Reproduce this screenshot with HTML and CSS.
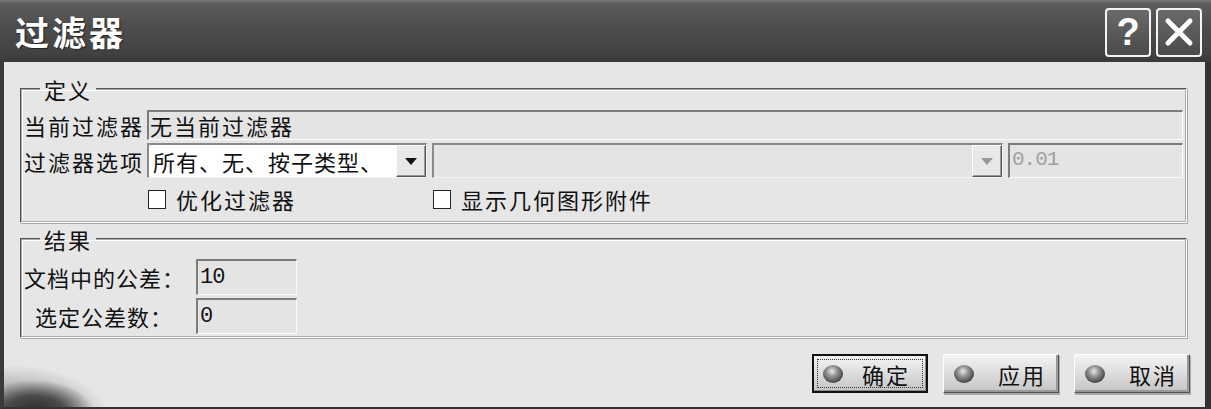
FILE: index.html
```html
<!DOCTYPE html>
<html>
<head>
  <meta charset="utf-8">
  <link rel="stylesheet" href="styles.css">
</head>
<body>
  <div class="window">
    <div class="titlebar">
      <span class="title">过滤器</span>
      <div class="title-buttons">
        <span class="tbtn help">?</span>
        <span class="tbtn close">
          <svg width="34" height="34" viewBox="0 0 34 34">
            <path d="M6 6 L28 28 M28 6 L6 28" stroke="#fff" stroke-width="5" stroke-linecap="round"/>
          </svg>
        </span>
      </div>
    </div>

    <div class="content">
      <fieldset class="group">
        <legend>定义</legend>
        <div class="def-grid">
          <span class="lbl">当前过滤器</span>
          <div class="field wide">无当前过滤器</div>

          <span class="lbl">过滤器选项</span>
          <div class="combo">
            <span class="combo-text">所有、无、按子类型、</span>
            <span class="arrow"><i class="tri"></i></span>
          </div>
          <div class="combo off">
            <span class="combo-text"></span>
            <span class="arrow"><i class="tri"></i></span>
          </div>
          <div class="field num off">0.01</div>

          <span></span>
          <label class="check"><span class="box"></span>优化过滤器</label>
          <label class="check span2"><span class="box"></span>显示几何图形附件</label>
        </div>
      </fieldset>

      <fieldset class="group result">
        <legend>结果</legend>
        <div class="res-grid">
          <span class="lbl center">文档中的公差：</span>
          <div class="field num">10</div>
          <span class="lbl center">选定公差数：</span>
          <div class="field num">0</div>
        </div>
      </fieldset>

      <div class="actions">
        <button class="btn default"><span class="inner"><i class="ball"></i><span class="btn-text">确定</span></span></button>
        <button class="btn"><span class="inner"><i class="ball"></i><span class="btn-text">应用</span></span></button>
        <button class="btn"><span class="inner"><i class="ball"></i><span class="btn-text">取消</span></span></button>
      </div>
    </div>
  </div>
</body>
</html>
```

FILE: styles.css
```css
html, body {
  margin: 0;
  padding: 0;
  background: #e6e6e6;
}
body {
  font-family: "Noto Sans CJK SC", sans-serif;
  font-size: 22px;
  color: #111;
}
.window {
  width: 1211px;
  height: 409px;
  box-sizing: border-box;
  display: flex;
  flex-direction: column;
  border-left: 4px solid #3a3a3a;
  border-right: 6px solid #333;
  border-bottom: 2px solid #333;
  background:
    radial-gradient(ellipse 60px 32px at 30px 412px, #2a2a2a 0%, #4a4a4a 50%, rgba(120,120,120,0.6) 80%, rgba(230,230,230,0) 100%),
    radial-gradient(ellipse 95px 55px at 10px 420px, rgba(90,90,90,0.9) 0%, rgba(160,160,160,0.5) 70%, rgba(230,230,230,0) 100%),
    #e6e6e6;
}
.titlebar {
  height: 62px;
  flex: none;
  margin-left: -4px;
  margin-right: -6px;
  padding: 0 9px 0 15px;
  display: flex;
  align-items: center;
  justify-content: space-between;
  background: linear-gradient(#7a7a7a 0, #5c5c5c 6%, #4e4e4e 40%, #444 80%, #3a3a3a 100%);
}
.title {
  color: #fff;
  font-size: 34px;
  font-weight: bold;
  letter-spacing: 3px;
  text-shadow: 1px 1px 1px #222;
}
.title-buttons {
  display: flex;
  gap: 5px;
  padding-top: 2px;
}
.tbtn {
  width: 42px;
  height: 45px;
  border: 2px solid #f4f4f4;
  border-radius: 4px;
  background: linear-gradient(#6a6a6a, #4a4a4a);
  color: #fff;
  display: flex;
  align-items: center;
  justify-content: center;
  font-family: "Liberation Sans", sans-serif;
  font-weight: bold;
  font-size: 38px;
}
.content {
  flex: 1;
  padding: 15px 18px 0 16px;
}
.group {
  margin: 0;
  padding: 9px 2px 4px 2px;
  border: 2px groove #f8f8f8;
  border-color: #a8a8a8 #fff #fff #a8a8a8;
  box-shadow: inset 1px 1px 0 #fff, 1px 1px 0 #a8a8a8;
}
.group legend {
  margin-left: 16px;
  padding: 0 4px;
  line-height: 24px;
  letter-spacing: 2px;
}
.result {
  margin-top: 4px;
  padding: 8px 2px 2px 2px;
}
.def-grid {
  display: grid;
  grid-template-columns: 118px 280px 571px 175px;
  grid-template-rows: 30px 35px 36px;
  column-gap: 5px;
  row-gap: 3px;
  align-items: center;
}
.lbl {
  letter-spacing: 2px;
  white-space: nowrap;
  line-height: 26px;
}
.field {
  height: 100%;
  box-sizing: border-box;
  background: #e4e4e4;
  border-top: 2px solid #7c7c7c;
  border-left: 2px solid #7c7c7c;
  border-right: 1px solid #fafafa;
  border-bottom: 1px solid #fafafa;
  padding-left: 1px;
  letter-spacing: 2px;
  line-height: 27px;
  white-space: nowrap;
}
.wide {
  grid-column: 2 / 5;
}
.combo {
  height: 35px;
  box-sizing: border-box;
  display: flex;
  background: #fff;
  border-top: 2px solid #8a8a8a;
  border-left: 2px solid #8a8a8a;
  border-right: 1px solid #f4f4f4;
  border-bottom: 1px solid #f4f4f4;
}
.combo.off {
  background: #e4e4e4;
}
.combo-text {
  flex: 1;
  padding-left: 4px;
  letter-spacing: 1px;
  line-height: 32px;
  white-space: nowrap;
  overflow: hidden;
}
.arrow {
  width: 30px;
  box-sizing: border-box;
  display: flex;
  align-items: center;
  justify-content: center;
  background: #e8e8e8;
  border: 1px solid;
  border-color: #fff #555 #555 #fff;
  box-shadow: inset -1px -1px 0 #999;
}
.tri {
  width: 0;
  height: 0;
  border-left: 6px solid transparent;
  border-right: 6px solid transparent;
  border-top: 7px solid #111;
}
.off .tri {
  border-top-color: #999;
}
.num {
  font-family: "Liberation Mono", monospace;
  font-size: 21px;
  letter-spacing: -1px;
  line-height: 30px;
  padding-left: 2px;
}
.num.off {
  color: #a0a0a0;
}
.check {
  display: flex;
  align-items: center;
  gap: 10px;
  letter-spacing: 2px;
  padding-left: 1px;
}
.span2 {
  grid-column: 3 / 5;
}
.box {
  width: 16px;
  height: 17px;
  background: #fff;
  border: 1px solid #222;
}
.res-grid {
  display: grid;
  grid-template-columns: 160px 101px;
  grid-template-rows: 36px 36px;
  column-gap: 12px;
  row-gap: 3px;
  align-items: center;
}
.res-grid .num {
  line-height: 34px;
  font-size: 22px;
}
.center {
  text-align: center;
  letter-spacing: 1px;
}
.actions {
  display: flex;
  justify-content: flex-end;
  gap: 15px;
  margin-top: 16px;
  margin-right: -3px;
}
.btn {
  width: 116px;
  height: 39px;
  padding: 0;
  font-family: inherit;
  font-size: 22px;
  color: #111;
  background: linear-gradient(#f4f4f4, #d8d8d8 60%, #c4c4c4);
  border: 1px solid;
  border-color: #fff #555 #555 #fff;
  box-shadow: inset -2px -2px 0 #999, 1px 2px 0 #aaa;
  display: flex;
}
.btn .inner {
  flex: 1;
  display: flex;
  align-items: center;
  padding-left: 10px;
}
.btn.default {
  border: 2px solid #111;
  box-shadow: inset -1px -1px 0 #888;
}
.btn.default .inner {
  margin: 3px;
  border: 1px dotted #333;
  padding-left: 5px;
}
.ball {
  width: 20px;
  height: 18px;
  border-radius: 50%;
  background: radial-gradient(circle at 45% 35%, #e8e8e8 0, #9a9a9a 30%, #4a4a4a 70%, #222 100%);
}
.btn-text {
  flex: 1;
  text-align: right;
  letter-spacing: 2px;
  padding-right: 12px;
}
```
